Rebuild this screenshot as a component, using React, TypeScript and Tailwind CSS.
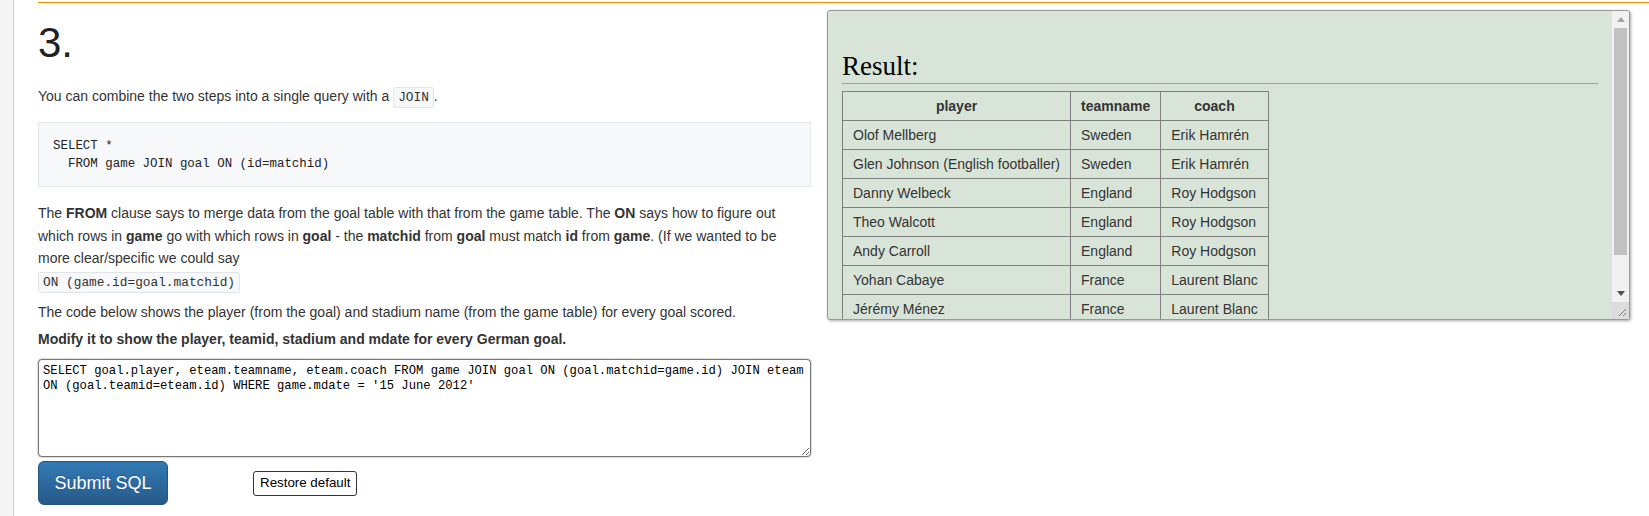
import React from 'react';

const rows = [
  ['Olof Mellberg', 'Sweden', 'Erik Hamrén'],
  ['Glen Johnson (English footballer)', 'Sweden', 'Erik Hamrén'],
  ['Danny Welbeck', 'England', 'Roy Hodgson'],
  ['Theo Walcott', 'England', 'Roy Hodgson'],
  ['Andy Carroll', 'England', 'Roy Hodgson'],
  ['Yohan Cabaye', 'France', 'Laurent Blanc'],
  ['Jérémy Ménez', 'France', 'Laurent Blanc'],
];

const sans = "font-['Liberation_Sans',Arial,sans-serif]";
const mono = "font-['Liberation_Mono','DejaVu_Sans_Mono',monospace]";

function Code({ children }: { children: React.ReactNode }) {
  return (
    <code className="font-['Liberation_Mono','DejaVu_Sans_Mono',monospace] text-[12.8px] leading-[12px] text-[#333] bg-[#f6f8fa] border border-[#e1e4e8] rounded-[3px] px-[4px] py-[2px]">
      {children}
    </code>
  );
}

function FakeScrollbar() {
  return (
    <div className="w-[17px] flex flex-col bg-[#f1f1f1] shrink-0">
      <div className="h-[17px] flex items-center justify-center">
        <svg width="8" height="5" viewBox="0 0 8 5">
          <path d="M0 5 L4 0 L8 5 Z" fill="#a3a3a3" />
        </svg>
      </div>
      <div className="flex-1 px-[2px]">
        <div className="h-[227px] bg-[#c1c1c1]" />
      </div>
      <div className="h-[17px] flex items-center justify-center">
        <svg width="8" height="5" viewBox="0 0 8 5">
          <path d="M0 0 L8 0 L4 5 Z" fill="#505050" />
        </svg>
      </div>
      <div className="h-[17px] bg-[#dcdcdc] flex items-end justify-end p-[2px]">
        <svg width="10" height="10" viewBox="0 0 10 10">
          <path d="M9 2 L2 9 M9 6 L6 9" stroke="#7a7a7a" strokeWidth="1" />
        </svg>
      </div>
    </div>
  );
}

export default function App() {
  return (
    <div className={`${sans} flex min-h-[516px] bg-white text-[14px] text-[#333]`}>
      <div className="w-[14px] bg-[#f5f5f5] border-r border-[#a6d3fa] shrink-0" />
      <div className="flex-1 ml-[24px] pt-[2px]">
        <div className="border-t border-[#f08c00] flex items-start">
          {/* left column */}
          <div className="w-[773px] shrink-0">
            <h2 className="mt-[17px] text-[42px] leading-[46px] font-normal text-[#222]">3.</h2>

            <p className="mt-[19px] leading-[22.4px]">
              You can combine the two steps into a single query with a <Code>JOIN</Code>.
            </p>

            <pre className={`${mono} mt-[15px] bg-[#f6f8fa] border border-[#e5e7e9] pl-[14px] pt-[14px] pb-[13px] text-[12.45px] leading-[18px] text-[#222]`}>
{`SELECT *
  FROM game JOIN goal ON (id=matchid)`}
            </pre>

            <p className="mt-[15px] leading-[22.4px]">
              The <b>FROM</b> clause says to merge data from the goal table with that from the game table. The{' '}
              <b>ON</b> says how to figure out which rows in <b>game</b> go with which rows in <b>goal</b> - the{' '}
              <b>matchid</b> from <b>goal</b> must match <b>id</b> from <b>game</b>. (If we wanted to be more
              clear/specific we could say
              <br />
              <Code>ON (game.id=goal.matchid)</Code>
            </p>

            <p className="mt-[9px] leading-[22.4px]">
              The code below shows the player (from the goal) and stadium name (from the game table) for every goal
              scored.
            </p>

            <p className="mt-[5px] leading-[22.4px] font-bold">
              Modify it to show the player, teamid, stadium and mdate for every German goal.
            </p>

            <textarea
              className={`${mono} block mt-[8.6px] w-[773px] h-[98px] border border-[#767676] rounded-[4px] shadow-[0_0_2px_rgba(0,0,0,0.45)] pl-[4px] pr-[2px] py-[4px] text-[12.2px] leading-[14.6px] text-black bg-white`}
              spellCheck={false}
              defaultValue={
                "SELECT goal.player, eteam.teamname, eteam.coach FROM game JOIN goal ON (goal.matchid=game.id) JOIN eteam ON (goal.teamid=eteam.id) WHERE game.mdate = '15 June 2012'"
              }
            />

            <div className="mt-[4px] flex items-center">
              <button className="w-[130px] h-[44px] rounded-[6px] border border-[#245580] bg-gradient-to-b from-[#337ab7] to-[#265a88] text-white text-[18px] [text-shadow:0_-1px_0_rgba(0,0,0,0.2)]">
                Submit SQL
              </button>
              <button className="ml-[85px] h-[25px] px-[6px] bg-white border border-[#333] rounded-[3px] text-[13.33px] text-black">
                Restore default
              </button>
            </div>
          </div>

          {/* result panel */}
          <div className="ml-[16px] mt-[7px] w-[803px] h-[310px] flex bg-[#d9e4d8] border border-[#999] rounded-[3px] shadow-[1px_1px_3px_rgba(0,0,0,0.35)] overflow-hidden">
            <div className="flex-1 overflow-hidden px-[14px] pt-[39px]">
              <h3 className="font-['Liberation_Serif','Times_New_Roman',serif] text-[27px] leading-[32px] font-normal text-black border-b border-[#a0a0a0] pb-[1px]">
                Result:
              </h3>
              <table className="mt-[7px] border-collapse text-[14px] text-[#333]">
                <thead>
                  <tr>
                    <th className="border border-[#808080] px-[10px] py-[4px] leading-[20px] font-bold">player</th>
                    <th className="border border-[#808080] px-[10px] py-[4px] leading-[20px] font-bold">teamname</th>
                    <th className="border border-[#808080] px-[10px] py-[4px] leading-[20px] font-bold">coach</th>
                  </tr>
                </thead>
                <tbody>
                  {rows.map((r, i) => (
                    <tr key={i}>
                      {r.map((c, j) => (
                        <td key={j} className="border border-[#808080] px-[10px] py-[4px] leading-[20px]">
                          {c}
                        </td>
                      ))}
                    </tr>
                  ))}
                </tbody>
              </table>
            </div>
            <FakeScrollbar />
          </div>
        </div>
      </div>
    </div>
  );
}
